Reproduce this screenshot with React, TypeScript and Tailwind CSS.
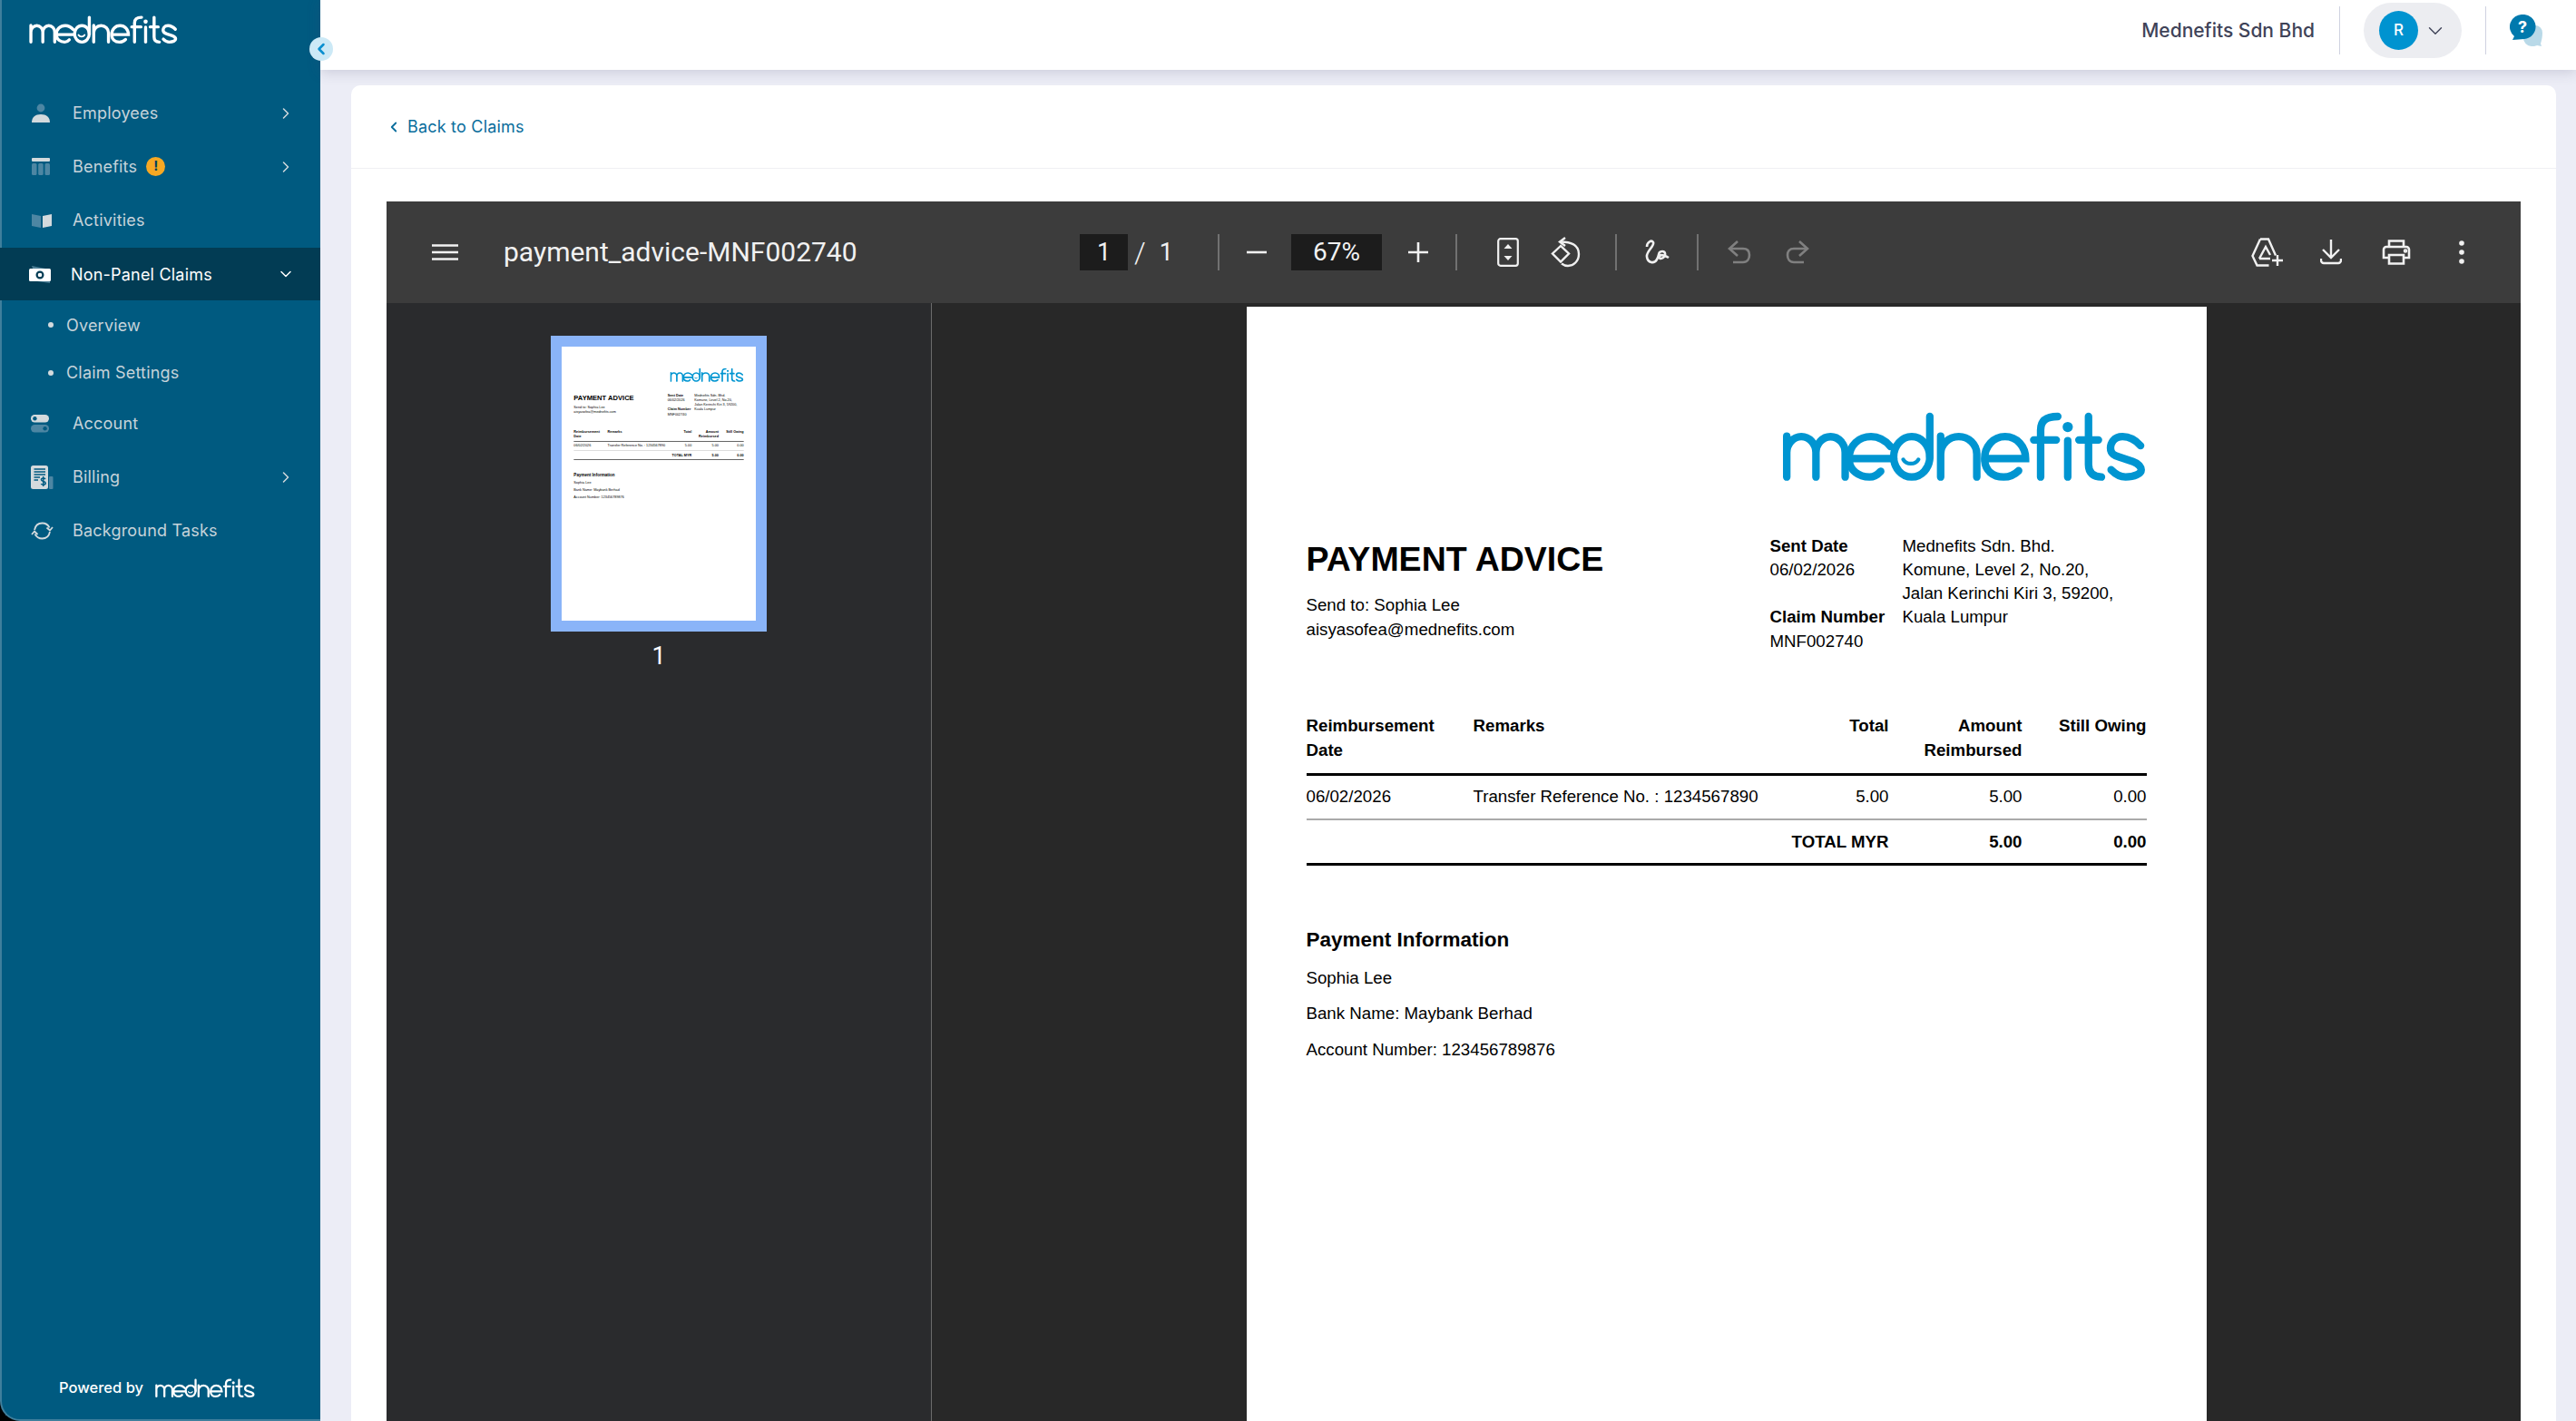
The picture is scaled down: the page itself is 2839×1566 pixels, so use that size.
import { ChevronDown, ChevronLeft, ChevronRight } from "lucide-react";

const sans = "font-['Inter','Liberation_Sans',sans-serif]";
const roboto = "font-['Roboto','Liberation_Sans',sans-serif]";

function Logo({ color, className }: { color: string; className: string }) {
  return (
    <svg viewBox="130 100 1210 235" fill="none" stroke={color} strokeWidth="25" strokeLinecap="round" className={className}>
      <path d="M145 316V180M145 235a48.5 53 0 0 1 97 0V316M242 235a48.5 53 0 0 1 97 0V316" />
      <path d="M352 255H500M352 255C352 210 385 182 425 182C450 182 470 192 490 215M352 255C352 295 385 316 420 316C435 316 447 308 457 297" />
      <ellipse cx="560" cy="249" rx="60" ry="67" />
      <path d="M620 115V250" />
      <path d="M532 258c10 18 40 18 50 0" strokeWidth="13" />
      <path d="M656 316V180M656 240a60 58 0 0 1 120 0V316" />
      <path d="M802 255H938C938 215 910 182 870 182C830 182 802 215 802 255C802 295 830 316 865 316C885 316 902 308 915 295" />
      <path d="M988 316V160C988 130 1005 115 1045 115M965 193H1040" />
      <path d="M1078 195V316" />
      <circle cx="1078" cy="150" r="17" fill={color} stroke="none" />
      <path d="M1147 115V275C1147 305 1165 316 1190 316M1115 193H1180" />
      <path d="M1320 212C1300 190 1280 182 1260 182C1230 182 1220 205 1220 220C1220 240 1235 245 1250 250L1295 265C1315 272 1322 285 1322 292C1322 305 1300 316 1270 316C1250 316 1235 305 1222 292" />
    </svg>
  );
}

function NavIcon({ name }: { name: string }) {
  const light = "#d3dadd";
  const dim = "#4d86a3";
  if (name === "employees")
    return (
      <svg viewBox="0 0 22 22" className="w-[22px] h-[22px]">
        <circle cx="11" cy="5" r="4.4" fill={dim} />
        <path d="M1 21c0-6 4-9 10-9s10 3 10 9z" fill={light} />
      </svg>
    );
  if (name === "benefits")
    return (
      <svg viewBox="0 0 22 20" className="w-[22px] h-[20px]">
        <rect x="1" y="0" width="20" height="4" rx="1" fill={light} />
        <rect x="1" y="6" width="5.5" height="13" rx="1.5" fill={dim} />
        <rect x="8.2" y="6" width="5.5" height="13" rx="1.5" fill={dim} />
        <rect x="15.5" y="6" width="5.5" height="13" rx="1.5" fill={dim} />
      </svg>
    );
  if (name === "activities")
    return (
      <svg viewBox="0 0 24 16" className="w-[24px] h-[16px]">
        <path d="M1 1l10 2v13l-10-2z" fill={dim} />
        <path d="M13 3l10-2v13l-10 2z" fill={light} />
      </svg>
    );
  if (name === "claims")
    return (
      <svg viewBox="0 0 25 19" className="w-[25px] h-[19px]">
        <path d="M3 0l20 4v15l-14-2z" fill="#4d7f96" />
        <rect x="0" y="3" width="24" height="14" rx="1.5" fill="#fff" />
        <circle cx="12" cy="10" r="3.4" fill="none" stroke="#023c54" strokeWidth="2.2" />
      </svg>
    );
  if (name === "account")
    return (
      <svg viewBox="0 0 20 20" className="w-[20px] h-[20px]">
        <rect x="0" y="0" width="20" height="8.5" rx="4.2" fill={light} />
        <circle cx="4.4" cy="4.2" r="2.2" fill="#005a80" />
        <rect x="0" y="11" width="20" height="8.5" rx="4.2" fill={dim} />
        <circle cx="15.6" cy="15.2" r="2.2" fill="#005a80" />
      </svg>
    );
  if (name === "billing")
    return (
      <svg viewBox="0 0 25 26" className="w-[25px] h-[26px]">
        <rect x="20" y="12" width="4.5" height="14" rx="1" fill={dim} />
        <rect x="0" y="0" width="19" height="26" rx="2.5" fill={light} />
        <path d="M3.5 4H16M3.5 7H16M3.5 10H16M3.5 13H10M3.5 16H8" stroke="#005a80" strokeWidth="1.5" />
        <path d="M16 15c-1-1.5-4.6-1.5-4.6.6 0 2.6 4.8 1.3 4.8 4 0 2-3.8 2-5 .5M13.7 12v11" stroke="#005a80" strokeWidth="1.5" fill="none" />
      </svg>
    );
  return (
    <svg viewBox="0 0 25 20" fill="none" stroke={light} strokeWidth="1.8" className="w-[25px] h-[20px]">
      <path d="M4 9C5 4 8 1.5 12.5 1.5c4 0 6.500 2 8 5" />
      <path d="M17.5 6.500L21 9.500l3-3.500" />
      <path d="M21 11c-1 5-4 7.500-8.500 7.500-4 0-6.500-2-8-5" />
      <path d="M1 14l3-3.500 3.500 3.500" />
    </svg>
  );
}

function NavItem({ icon, label, chevron, badge }: { icon: string; label: string; chevron?: boolean; badge?: boolean }) {
  return (
    <div className="flex items-center h-[59px] pl-[32px] pr-[28px] text-[#c6d3da]">
      <div className="w-[46px] flex items-center">
        <NavIcon name={icon} />
      </div>
      <span className="text-[18px] tracking-[0.2px]">{label}</span>
      {badge && (
        <span className="ml-[10px] w-[21px] h-[21px] rounded-full bg-[#f7a823] text-[#00415e] text-[15px] font-bold flex items-center justify-center">!</span>
      )}
      {chevron && <ChevronRight className="ml-auto w-[20px] h-[20px] text-[#d3dadd]" strokeWidth={1.8} />}
    </div>
  );
}

function Sidebar() {
  return (
    <div className="w-[353px] h-full shrink-0 bg-black">
      <div className={`h-full flex flex-col bg-[#005a80] border-l-2 border-b-2 border-[#3f7f9c] rounded-bl-[22px] ${sans}`}>
        <Logo color="#fff" className="ml-[30px] mt-[17px] w-[164px] h-[32px]" />
        <div className="mt-[46px] flex flex-col">
          <NavItem icon="employees" label="Employees" chevron />
          <NavItem icon="benefits" label="Benefits" chevron badge />
          <NavItem icon="activities" label="Activities" />
          <div className="mt-[1px] flex items-center h-[58px] pl-[30px] pr-[28px] bg-[#023c54] text-white -ml-[2px] w-[353px]">
            <div className="w-[48px] pl-[2px] flex items-center">
              <NavIcon name="claims" />
            </div>
            <span className="text-[18px] tracking-[0.2px]">Non-Panel Claims</span>
            <ChevronDown className="ml-auto w-[20px] h-[20px]" strokeWidth={1.8} />
          </div>
          <div className="flex flex-col pt-[1px] text-[#c6d3da]">
            <div className="h-[52px] flex items-center pl-[51px] text-[18px] tracking-[0.2px]">
              <span className="w-[6px] h-[6px] rounded-full bg-[#d3dadd] mr-[14px]" />
              Overview
            </div>
            <div className="h-[53px] flex items-center pl-[51px] text-[18px] tracking-[0.2px]">
              <span className="w-[6px] h-[6px] rounded-full bg-[#d3dadd] mr-[14px]" />
              Claim Settings
            </div>
          </div>
          <NavItem icon="account" label="Account" />
          <NavItem icon="billing" label="Billing" chevron />
          <NavItem icon="tasks" label="Background Tasks" />
        </div>
        <div className="mt-auto mb-[22px] ml-[63px] flex items-center text-[16.5px] font-medium text-white">
          Powered by
          <Logo color="#fff" className="ml-[13px] w-[110px] h-[22px]" />
        </div>
      </div>
    </div>
  );
}

function TopBar() {
  return (
    <header className={`relative z-10 h-[77px] shrink-0 bg-white flex items-center pb-[10px] shadow-[0_2px_14px_rgba(70,70,110,0.22)] ${sans}`}>
      <span className="ml-auto text-[21px] font-medium text-[#3f4358]">Mednefits Sdn Bhd</span>
      <span className="ml-[27px] w-px h-[53px] bg-[#cfd2e0]" />
      <div className="ml-[26px] w-[108px] h-[61px] rounded-full bg-[#ecedf1] flex items-center pl-[17px]">
        <span className="w-[43px] h-[43px] rounded-full bg-[#0093d0] text-white text-[17px] font-medium flex items-center justify-center">R</span>
        <ChevronDown className="ml-[6px] w-[26px] h-[26px] text-[#3f4358]" strokeWidth={1.3} />
      </div>
      <span className="ml-[26px] w-px h-[53px] bg-[#cfd2e0]" />
      <svg viewBox="0 0 36 36" className="ml-[26px] mr-[37px] w-[36px] h-[36px]">
        <path d="M16 12h12a8 8 0 0 1 8 8c0 5-1 9-2 12l1 3-5-1c-2 1-4 1-6 1a9 9 0 0 1-9-9z" fill="#b9d9e8" />
        <path d="M14 0a13.5 13.5 0 0 1 2 27l-13 1 2-4A13.5 13.5 0 0 1 14 0z" fill="#0079ad" />
        <text x="14" y="20" textAnchor="middle" fontSize="18" fontWeight="700" fill="#fff" fontFamily="Inter, sans-serif">?</text>
      </svg>
    </header>
  );
}

const ic = "fill-none stroke-[#f1f1f1]";

function ToolDivider({ className }: { className: string }) {
  return <span className={`w-[2px] h-[40px] bg-[#717171] ${className}`} />;
}

function Toolbar() {
  return (
    <div className={`h-[112px] shrink-0 bg-[#3c3c3c] flex items-center text-[#f1f1f1] ${roboto}`}>
      <svg viewBox="0 0 29 18" className="ml-[50px] w-[29px] h-[18px]">
        <path d="M0 1.5h29M0 9h29M0 16.5h29" stroke="#f1f1f1" strokeWidth="2.6" />
      </svg>
      <span className="ml-[50px] w-[635px] text-[30px] leading-none whitespace-nowrap">payment_advice-MNF002740</span>
      <span className="w-[53px] h-[40px] bg-[#1c1c1c] flex items-center justify-center text-[27px]">1</span>
      <span className="ml-[7px] text-[32px] font-light">/</span>
      <span className="ml-[15px] text-[27px]">1</span>
      <ToolDivider className="ml-[49px]" />
      <svg viewBox="0 0 22 22" className={`ml-[30px] w-[22px] h-[22px] ${ic}`} strokeWidth="2.6"><path d="M0 11h22" /></svg>
      <span className="ml-[27px] w-[100px] h-[40px] bg-[#1c1c1c] flex items-center justify-center text-[28px]">67%</span>
      <svg viewBox="0 0 22 22" className={`ml-[29px] w-[22px] h-[22px] ${ic}`} strokeWidth="2.6"><path d="M0 11h22M11 0v22" /></svg>
      <ToolDivider className="ml-[30px]" />
      <svg viewBox="0 0 24 32" className="ml-[44px] w-[24px] h-[32px]">
        <rect x="1.2" y="1.2" width="21.6" height="29.6" rx="2.5" fill="none" stroke="#f1f1f1" strokeWidth="2.2" />
        <path d="M12 7l4.5 5h-9zM12 25l-4.5-5h9z" fill="#f1f1f1" />
      </svg>
      <svg viewBox="0 0 36 34" className={`ml-[35px] w-[36px] h-[34px] ${ic}`} strokeWidth="2.4">
        <path d="M11 10L2 18.5l9 9 9-9z" />
        <path d="M16 1l-6 4.5 6 4.5" />
        <path d="M11 5.5c11 0 20 3 20 13.5 0 8-6 13-12 13-3 0-5-1-7-2.500" />
      </svg>
      <ToolDivider className="ml-[35px]" />
      <svg viewBox="0 0 30 30" className={`ml-[29px] w-[30px] h-[30px] ${ic}`} strokeWidth="2.6">
        <path d="M4 9C4 4 9 1 11 4C13 8 3 14 4 20C5 27 12 28 15 23C18 18 16 14 21 14C25 14 25 19 22 21C19 23 16 21 18 19C20 17 25 19 28 21" />
      </svg>
      <ToolDivider className="ml-[29px]" />
      <svg viewBox="0 0 26 28" className="ml-[32px] w-[26px] h-[28px] fill-none stroke-[#808080]" strokeWidth="2.6">
        <path d="M11 2L2 10l9 8" />
        <path d="M2 10h15c5 0 7 3 7 7s-2 8-7 8H6" />
      </svg>
      <svg viewBox="0 0 26 28" className="ml-[38px] w-[26px] h-[28px] fill-none stroke-[#808080]" strokeWidth="2.6">
        <path d="M15 2l9 8-9 8" />
        <path d="M24 10H9c-5 0-7 3-7 7s2 8 7 8h11" />
      </svg>
      <svg viewBox="0 0 36 32" className={`ml-[487px] w-[36px] h-[32px] ${ic}`} strokeWidth="2.4">
        <path d="M10 1.5h9l8 18" />
        <path d="M10 1.5L1.5 20l5 10.5h13" />
        <path d="M9 23l7-13 5 9" />
        <path d="M9 23h12M29 19v12M23 25h12" />
      </svg>
      <svg viewBox="0 0 24 28" className={`ml-[40px] w-[24px] h-[28px] ${ic}`} strokeWidth="2.4">
        <path d="M12 0v19M3 11l9 9 9-9M1 21v2a3 3 0 0 0 3 3h16a3 3 0 0 0 3-3v-2" />
      </svg>
      <svg viewBox="0 0 32 28" className={`ml-[44px] w-[32px] h-[28px] ${ic}`} strokeWidth="2.6">
        <path d="M8 8V1.5h16V8" />
        <path d="M8 20H2V11a3 3 0 0 1 3-3h22a3 3 0 0 1 3 3v9h-6" />
        <path d="M8 17h16v9.5H8z" />
        <circle cx="26" cy="12.5" r="1" />
      </svg>
      <svg viewBox="0 0 6 26" className="ml-[53px] w-[6px] h-[26px]">
        <circle cx="3" cy="3" r="2.8" fill="#f1f1f1" />
        <circle cx="3" cy="13" r="2.8" fill="#f1f1f1" />
        <circle cx="3" cy="23" r="2.8" fill="#f1f1f1" />
      </svg>
    </div>
  );
}

function PaymentDoc() {
  return (
    <div className="w-[1058px] h-[1493px] bg-white text-black px-[66px] font-['Liberation_Sans',Arial,sans-serif] text-[18.7px] leading-[26px]">
      <div className="flex justify-end pt-[116px]">
        <Logo color="#0095d1" className="w-[402px] h-[78px]" />
      </div>
      <div className="flex mt-[57px]">
        <div className="w-[511px]">
          <div className="mt-[5px] text-[37.5px] font-bold leading-[44px]">PAYMENT ADVICE</div>
          <div className="mt-[16px]">Send to: Sophia Lee</div>
          <div className="mt-[1px]">aisyasofea@mednefits.com</div>
        </div>
        <div className="w-[146px]">
          <div className="font-bold">Sent Date</div>
          <div>06/02/2026</div>
          <div className="mt-[26px] font-bold">Claim Number</div>
          <div className="mt-[1px]">MNF002740</div>
        </div>
        <div>
          <div>Mednefits Sdn. Bhd.</div>
          <div>Komune, Level 2, No.20,</div>
          <div>Jalan Kerinchi Kiri 3, 59200,</div>
          <div>Kuala Lumpur</div>
        </div>
      </div>
      <div className="mt-[66px]">
        <div className="grid grid-cols-[184px_1fr_147px_137px] font-bold border-b-[3px] border-black pb-[12px] leading-[27px]">
          <div>Reimbursement<br />Date</div>
          <div className="flex justify-between"><span>Remarks</span><span>Total</span></div>
          <div className="text-right">Amount<br />Reimbursed</div>
          <div className="text-right">Still Owing</div>
        </div>
        <div className="grid grid-cols-[184px_1fr_147px_137px] border-b-2 border-[#aaaaaa] h-[49px] items-center pb-[2px]">
          <div>06/02/2026</div>
          <div className="flex justify-between"><span>Transfer Reference No. : 1234567890</span><span>5.00</span></div>
          <div className="text-right">5.00</div>
          <div className="text-right">0.00</div>
        </div>
        <div className="grid grid-cols-[184px_1fr_147px_137px] font-bold border-b-[3px] border-black h-[50px] items-center">
          <div />
          <div className="text-right">TOTAL MYR</div>
          <div className="text-right">5.00</div>
          <div className="text-right">0.00</div>
        </div>
      </div>
      <div className="mt-[69px] text-[22.5px] font-bold">Payment Information</div>
      <div className="mt-[16px]">Sophia Lee</div>
      <div className="mt-[13px]">Bank Name: Maybank Berhad</div>
      <div className="mt-[14px]">Account Number: 123456789876</div>
    </div>
  );
}

function PdfViewer() {
  return (
    <div className="flex-1 min-h-0 flex flex-col">
      <Toolbar />
      <div className="flex-1 min-h-0 flex">
        <div className="w-[601px] shrink-0 bg-[#2a2b2d] border-r border-[#6b6b6b] flex flex-col items-center pt-[36px]">
          <div className="w-[238px] h-[326px] border-[12px] border-[#8ab4f8] bg-white overflow-hidden">
            <div className="origin-top-left scale-[0.2023]">
              <PaymentDoc />
            </div>
          </div>
          <span className={`mt-[7px] text-[27px] text-white ${roboto}`}>1</span>
        </div>
        <div className="flex-1 min-w-0 bg-[#282828] flex justify-center pt-[4px] overflow-hidden">
          <PaymentDoc />
        </div>
      </div>
    </div>
  );
}

export default function App() {
  return (
    <div className="relative w-[2839px] h-[1566px] flex overflow-hidden bg-[#ecedf6]">
      <Sidebar />
      <button className="absolute z-20 left-[341px] top-[41px] w-[26px] h-[26px] rounded-full bg-[#cce9f6] flex items-center justify-center">
        <ChevronLeft className="w-[20px] h-[20px] text-[#0a8fcf]" strokeWidth={3} />
      </button>
      <main className="flex-1 min-w-0 flex flex-col">
        <TopBar />
        <div className="flex-1 min-h-0 pl-[34px] pr-[22px] pt-[17px]">
          <div className="h-full rounded-t-[10px] bg-white flex flex-col">
            <div className={`h-[92px] shrink-0 border-b border-[#f0f0f3] flex items-center pl-[38px] text-[#0a6d9c] ${sans}`}>
              <ChevronLeft className="w-[18px] h-[18px] mr-[6px]" strokeWidth={2.4} />
              <span className="text-[18px] tracking-[0.2px]">Back to Claims</span>
            </div>
            <div className="flex-1 min-h-0 flex flex-col px-[39px] pt-[36px]">
              <PdfViewer />
            </div>
          </div>
        </div>
      </main>
    </div>
  );
}
